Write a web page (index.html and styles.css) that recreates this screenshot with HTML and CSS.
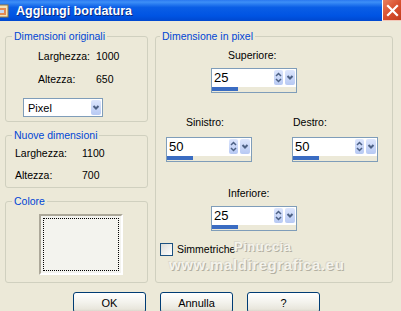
FILE: index.html
```html
<!DOCTYPE html>
<html lang="it">
<head>
  <meta charset="UTF-8">
  <title>Aggiungi bordatura</title>
  <link rel="stylesheet" href="styles.css">
</head>
<body>
  <div class="window">
    <div class="titlebar">
      <svg class="title-icon" width="9" height="14" viewBox="7 0 9 14">
        <rect x="1" y="1" width="14" height="12" fill="#f3e2b8" stroke="#9c7a3c"/>
        <rect x="4" y="4" width="9" height="7" fill="#e58a52"/>
        <rect x="6" y="6" width="5" height="3" fill="#c9d8f0"/>
      </svg>
      <span class="title-text">Aggiungi bordatura</span>
      <div class="close-btn">
        <svg width="13" height="13" viewBox="0 0 13 13">
          <path d="M2 2 L11 11 M11 2 L2 11" stroke="#fff" stroke-width="2.2" stroke-linecap="square"/>
        </svg>
      </div>
    </div>

    <div class="dialog-body">
      <div class="left-col">
        <fieldset class="group group-orig">
          <legend>Dimensioni originali</legend>
          <div class="info-grid orig-grid">
            <span>Larghezza:</span><span>1000</span>
            <span>Altezza:</span><span>650</span>
          </div>
          <div class="select-box">
            <span class="select-value">Pixel</span>
            <span class="drop-btn">
              <svg width="10" height="15" viewBox="0 0 10 15"><path d="M2.5 6 L5 8.5 L7.5 6" fill="none" stroke="#4d6185" stroke-width="2"/></svg>
            </span>
          </div>
        </fieldset>

        <fieldset class="group group-new">
          <legend>Nuove dimensioni</legend>
          <div class="info-grid new-grid">
            <span>Larghezza:</span><span>1100</span>
            <span>Altezza:</span><span>700</span>
          </div>
        </fieldset>

        <fieldset class="group group-color">
          <legend>Colore</legend>
          <div class="color-swatch"><div class="color-focus"></div></div>
        </fieldset>
      </div>

      <fieldset class="group group-pixel">
        <legend>Dimensione in pixel</legend>

        <div class="spin-block block-top">
          <div class="spin-label">Superiore:</div>
          <div class="spin">
            <div class="spin-field">
              <span class="spin-value">25</span>
              <span class="spin-arrows"><svg width="9" height="15" viewBox="0 0 9 15"><path d="M2 6 L4.5 3.5 L7 6 M2 9 L4.5 11.5 L7 9" fill="none" stroke="#4d6185" stroke-width="1.5"/></svg></span>
              <span class="drop-btn"><svg width="10" height="15" viewBox="0 0 10 15"><path d="M2.5 6 L5 8.5 L7.5 6" fill="none" stroke="#4d6185" stroke-width="2"/></svg></span>
            </div>
            <div class="spin-track"><div class="spin-fill"></div></div>
          </div>
        </div>

        <div class="spin-row">
          <div class="spin-block block-left">
            <div class="spin-label">Sinistro:</div>
            <div class="spin">
              <div class="spin-field">
                <span class="spin-value">50</span>
                <span class="spin-arrows"><svg width="9" height="15" viewBox="0 0 9 15"><path d="M2 6 L4.5 3.5 L7 6 M2 9 L4.5 11.5 L7 9" fill="none" stroke="#4d6185" stroke-width="1.5"/></svg></span>
                <span class="drop-btn"><svg width="10" height="15" viewBox="0 0 10 15"><path d="M2.5 6 L5 8.5 L7.5 6" fill="none" stroke="#4d6185" stroke-width="2"/></svg></span>
              </div>
              <div class="spin-track"><div class="spin-fill"></div></div>
            </div>
          </div>
          <div class="spin-block block-right">
            <div class="spin-label">Destro:</div>
            <div class="spin">
              <div class="spin-field">
                <span class="spin-value">50</span>
                <span class="spin-arrows"><svg width="9" height="15" viewBox="0 0 9 15"><path d="M2 6 L4.5 3.5 L7 6 M2 9 L4.5 11.5 L7 9" fill="none" stroke="#4d6185" stroke-width="1.5"/></svg></span>
                <span class="drop-btn"><svg width="10" height="15" viewBox="0 0 10 15"><path d="M2.5 6 L5 8.5 L7.5 6" fill="none" stroke="#4d6185" stroke-width="2"/></svg></span>
              </div>
              <div class="spin-track"><div class="spin-fill"></div></div>
            </div>
          </div>
        </div>

        <div class="spin-block block-bottom">
          <div class="spin-label">Inferiore:</div>
          <div class="spin">
            <div class="spin-field">
              <span class="spin-value">25</span>
              <span class="spin-arrows"><svg width="9" height="15" viewBox="0 0 9 15"><path d="M2 6 L4.5 3.5 L7 6 M2 9 L4.5 11.5 L7 9" fill="none" stroke="#4d6185" stroke-width="1.5"/></svg></span>
              <span class="drop-btn"><svg width="10" height="15" viewBox="0 0 10 15"><path d="M2.5 6 L5 8.5 L7.5 6" fill="none" stroke="#4d6185" stroke-width="2"/></svg></span>
            </div>
            <div class="spin-track"><div class="spin-fill"></div></div>
          </div>
        </div>

        <label class="check-row">
          <span class="checkbox"></span>
          <span>Simmetriche</span>
        </label>

        <div class="watermark wm-name">Pinuccia</div>
        <div class="watermark wm-site">www.maldiregrafica.eu</div>
      </fieldset>
    </div>

    <div class="button-row">
      <button class="xp-btn">OK</button>
      <button class="xp-btn">Annulla</button>
      <button class="xp-btn">?</button>
    </div>
  </div>
</body>
</html>
```

FILE: styles.css
```css
body { margin: 0; background: #ece9d8; font-family: "Liberation Sans", Arial, sans-serif; font-size: 10.5px; color: #000; overflow: hidden; }
.window { width: 401px; height: 311px; background: #ece9d8; }

.titlebar { height: 21px; display: flex; align-items: center; background: linear-gradient(#2a78f0 0%, #3d8ff7 10%, #0a5ee6 35%, #0054e3 75%, #0048cf 100%); }
.title-icon { display: block; }
.title-text { margin-left: 7px; color: #fff; font-family: "Liberation Sans", Arial, sans-serif; font-weight: bold; font-size: 12.5px; text-shadow: 1px 1px 0 #0a2a80; }
.close-btn { margin-left: auto; width: 18px; height: 20px; display: flex; align-items: center; justify-content: center; background: linear-gradient(135deg, #e9805f, #d9502f 50%, #c23b1c); border-left: 1px solid #fff; border-bottom: 1px solid #f3c7b8; }

.dialog-body { display: flex; gap: 7px; padding: 9px 8px 0 5px; }
.left-col { width: 143px; display: flex; flex-direction: column; gap: 7px; }

.group { margin: 0; border: 1px solid #d0d0bf; border-radius: 3px; padding: 0 4px 0 6px; min-width: 0; }
.group legend { padding: 0 2px; line-height: 13px; color: #0046d5; }

.info-grid { display: grid; row-gap: 10px; line-height: 13px; }
.orig-grid { grid-template-columns: 58px auto; padding: 7px 0 0 26px; }
.new-grid { grid-template-columns: 67px auto; padding: 5px 0 5px 3px; row-gap: 9px; }

.select-box { width: 78px; height: 17px; margin: 12px 0 4px 11px; border: 1px solid #7f9db9; background: #fff; display: flex; align-items: center; }
.select-value { flex: 1; padding-left: 4px; font-size: 11px; }
.select-box .drop-btn { margin-right: 1px; }

.drop-btn { width: 10px; height: 15px; display: block; background: linear-gradient(#dde6fd, #b7c9f3); border-radius: 2px; }
.drop-btn svg, .spin-arrows svg { display: block; }

.color-swatch { width: 76px; height: 53px; margin: 6px 0 7px 27px; border: 2px solid; border-color: #aca899 #fff #fff #aca899; background: #f3f3ee; padding: 2px; }
.color-focus { height: 100%; border: 1px dotted #000; box-sizing: border-box; }

.group-pixel { flex: 1; position: relative; padding: 0 4px 0 4px; }
.spin-label { line-height: 13px; }
.spin { width: 84px; border: 1px solid #7f9db9; background: #fff; }
.spin-field { height: 17px; display: flex; align-items: center; gap: 2px; padding-right: 1px; }
.spin-value { flex: 1; padding-left: 2px; font-size: 13px; }
.spin-arrows { width: 9px; height: 15px; display: block; background: linear-gradient(#dde6fd, #b7c9f3); border-radius: 2px; }
.spin-track { height: 5px; background: #ece9d8; border-top: 1px solid #fff; }
.spin-fill { width: 26px; height: 4px; background: #3a6cc2; }

.block-top { margin: 6px 0 0 51px; }
.block-top .spin-label, .block-bottom .spin-label { padding-left: 17px; }
.block-top .spin, .block-bottom .spin { margin-top: 6px; }
.spin-row { display: flex; gap: 40px; margin: 23px 0 0 6px; }
.block-left .spin-label { padding-left: 20px; }
.block-right .spin-label { padding-left: 1px; }
.spin-row .spin { margin-top: 8px; }
.block-bottom { margin: 25px 0 0 51px; }

.check-row { display: flex; align-items: center; gap: 4px; margin-top: 12px; line-height: 13px; }
.checkbox { width: 11px; height: 11px; border: 1px solid #1c5180; background: linear-gradient(135deg, #dcdcd7, #fff); }

.watermark { position: absolute; font-weight: bold; color: #f4f3ec; text-shadow: 1px 1px 0 #b3b0a2, -1px -1px 0 #dcd9cc; pointer-events: none; }
.wm-name { left: 78px; top: 196px; font-size: 13px; letter-spacing: 0.5px; }
.wm-site { left: 13px; top: 213px; font-size: 15px; letter-spacing: 0.6px; }

.button-row { display: flex; gap: 14px; padding: 9px 0 0 73px; }
.xp-btn { width: 73px; height: 21px; padding: 0; border: 1px solid #003c74; border-radius: 3px; background: linear-gradient(#fff, #f3f2ec 50%, #e8e6dc 85%, #d6d0c5); font-family: "Liberation Sans", Arial, sans-serif; font-size: 11px; color: #000; }
```
